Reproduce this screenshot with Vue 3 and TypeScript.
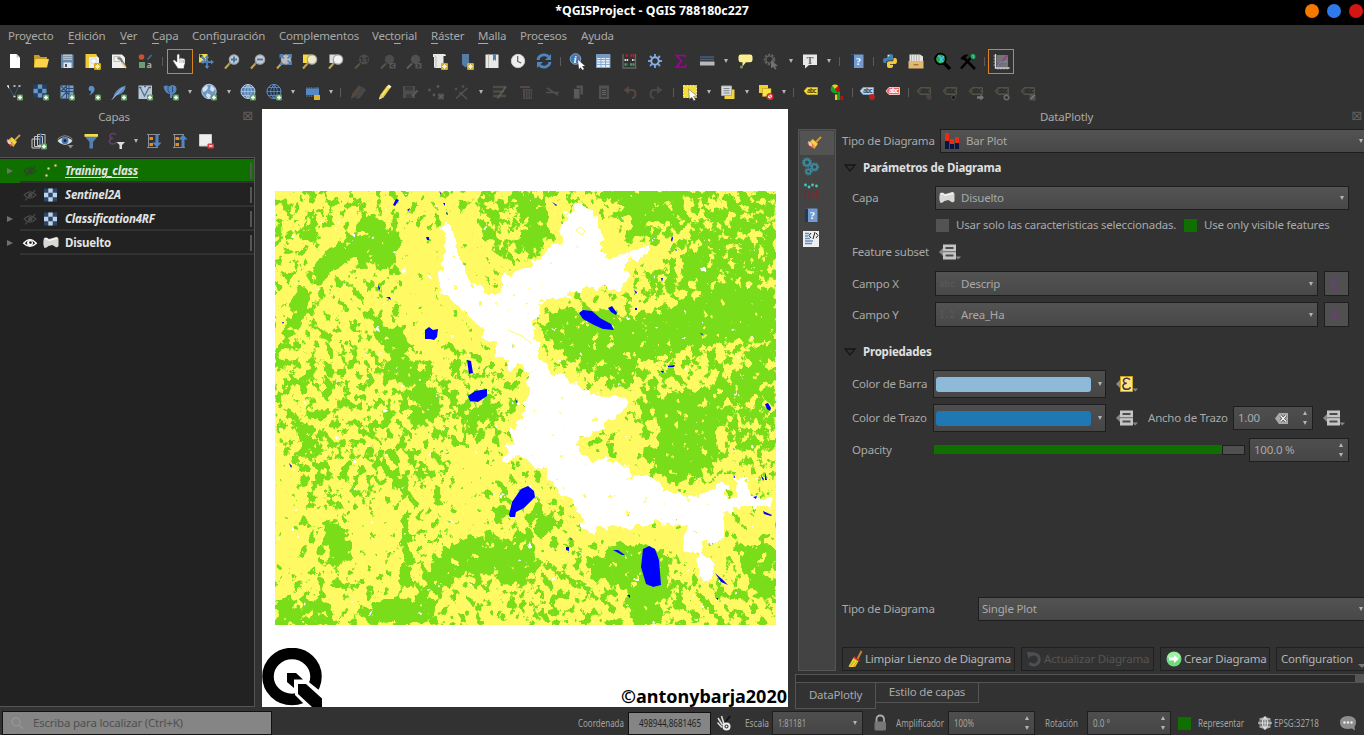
<script setup lang="ts">
interface ToolItem { k: string; w?: number; active?: boolean }

const menus: [string, string, string, number][] = [
  ['Pro', 'y', 'ecto', 60], ['', 'E', 'dición', 52], ['', 'V', 'er', 32], ['', 'C', 'apa', 40],
  ['Con', 'f', 'iguración', 87], ['Co', 'm', 'plementos', 93], ['Vect', 'o', 'rial', 59],
  ['', 'R', 'áster', 47], ['', 'M', 'alla', 42], ['Pro', 'c', 'esos', 61], ['A', 'y', 'uda', 50],
]

const plus = '<rect x="12" y="12.500" width="6" height="6" rx="1.300" fill="#5f9a63"/><path d="M15 13.500v4M13 15.500h4" stroke="#fff" stroke-width="1.500"/>'
const star = '<rect x="11" y="12" width="7" height="7" rx="1.300" fill="#d3aa1c"/><path d="M14.500 13v5M12 15.500h5M12.800 13.800l3.400 3.400M16.200 13.800l-3.400 3.400" stroke="#fff7c0" stroke-width=".9"/>'
const lens = (c: string, inner = '') => `<path d="M3 17.500l4.500-5" stroke="#d8a531" stroke-width="2"/><path d="M6.500 13.500l2-2" stroke="#888" stroke-width="2"/><circle cx="12" cy="8.500" r="4.700" fill="${c}" stroke="#a5a5a5" stroke-width="1.200"/>${inner}`
const globe = (fill: string, s: string) => `<circle cx="10" cy="9.500" r="7" fill="${fill}" stroke="${s}" stroke-width="1"/><path d="M3 9.500h14M4.500 5.500h11M4.500 13.500h11M10 2.500v14M10 2.500q-7 7 0 14M10 2.500q7 7 0 14" stroke="${s}" fill="none" stroke-width=".8"/>`
const tag = (f: string, s: string, t: string, extra = '') => `<path d="M3 9l3-3.500h10.500v7H6z" fill="${f}" stroke="${s}" stroke-width=".9"/><text x="6" y="11.300" font-size="6.500" font-weight="700" font-family="Noto Sans" fill="${t}" textLength="9.500">abc</text>${extra}`
const eps = (c: string, x: number, y: number, s: number) => `<path transform="translate(${x} ${y}) scale(${s})" d="M8 2.500Q7 .6 4.500 1 1.500 1.500 2 4q.5 1.700 3 1.700Q1.500 6 1.400 8.500q.1 3 3.600 3 2.700 0 3.500-2" fill="none" stroke="${c}" stroke-width="1.500"/>`
const brush = '<path d="M17 4l-5 5" stroke="#d99a3a" stroke-width="1.800"/><path d="M8.500 6l5.500 4.500-3.500 5.500-7-5.500z" fill="#e4a23c"/><path d="M9 6.500l4.500 4.500-2 2.500-4.500-4.500z" fill="#f6d23e"/><path d="M3 9.500l6 1.500-1 5z" fill="#d3472c"/><path d="M4 8l4 2.500.5 3-3.500-1z" fill="#e9cdbd"/>'
const checker = (a: string, b: string, n: number) => {
  const c = 13 / n
  let s = `<rect x="2" y="2" width="13" height="13" fill="${a}"/>`
  for (let i = 0; i < n; i++) for (let j = 0; j < n; j++) if ((i + j) % 2) s += `<rect x="${2 + i * c}" y="${2 + j * c}" width="${c}" height="${c}" fill="${b}"/>`
  return s
}

const ic: Record<string, string> = {
  file: '<path d="M5 3h6.500l3.500 3.500v10.500H5z" fill="#fff"/><path d="M11.500 3v3.500H15" fill="#ccc"/>',
  folder: '<path d="M3 4h5l1.500 2H16v10H3z" fill="#c99a1e"/><path d="M4.500 8H18l-2 8.500H3z" fill="#fbd44c"/>',
  save: '<path d="M4 3.500h12.500v13.500H4z" fill="#6488b2"/><path d="M6 3.500h9v5.500H6z" fill="#b9c0c5"/><path d="M6 5.500h9M6 7.500h9" stroke="#8b979f"/><path d="M6.500 11.500h8V17h-8z" fill="#e3e6e8"/><path d="M8 13h2v3H8z" fill="#41576f"/>',
  newlayout: '<path d="M3 3h9l4 4v10H3z" fill="#eee"/><path d="M2.500 3h11v3H6v11H2.500z" fill="#e8ca3b"/><path d="M8 8h5v4H8z" fill="#fff" stroke="#ccc" stroke-width=".6"/>' + star,
  layoutmgr: '<path d="M3 3.500h10l3 3v10.500H3z" fill="#f1f1f1"/><path d="M5 5.500h6v5H5z" fill="none" stroke="#aaa" stroke-width=".7"/><path d="M8.500 7.500a3 3 0 0 1 4 2l4 6" stroke="#777" stroke-width="2.200" fill="none"/><path d="M12.500 11.500l4.500 5.500" stroke="#edd57a" stroke-width="1.800"/>',
  style: '<circle cx="6.500" cy="6" r="2.800" fill="#c75331"/><path d="M4 11h6v6H4z" fill="#6f9c76"/><path d="M16.500 4l-4 4.500" stroke="#47688c" stroke-width="1.800"/><text x="11.500" y="17" font-size="9" font-weight="700" font-family="Noto Sans" fill="#aaa">a</text>',
  hand: '<path d="M7 11V4.500q0-1.500 1.300-1.500t1.200 1.500V8l1-1 1.500.3 1.300.2 1.700.8v4.200L14 15v2.500H8L5 13l-2-3q-.3-1.500 1.300-1z" fill="#fff" stroke="#555" stroke-width=".5"/><path d="M10 8v4M12 8.500V12M13.700 9v3" stroke="#888" stroke-width=".6"/>',
  pansel: '<path d="M3 3h8.500v8.500H3z" fill="#f2dd4a"/><path d="M4.500 4.500l5 5M11 6.500v9M7 11h9" stroke="#4d7db3" stroke-width="1.800"/><path d="M3.500 3.500l3.500.5-3 3z" fill="#333"/><path d="M11 4l-2.300 3h4.600zM11 18l-2.300-3h4.600zM18 11l-3-2.300v4.600zM4.500 11l3-2.300v4.600z" fill="#5688c0"/>',
  zin: lens('#c3ccd6', '<path d="M12 5.500v6M9 8.500h6" stroke="#4673a8" stroke-width="1.800"/>'),
  zout: lens('#c3ccd6', '<path d="M9 8.500h6" stroke="#4673a8" stroke-width="1.800"/>'),
  zfull: lens('#b9bcc2', '<path d="M5.500 3h4.500l-4.500 4.500zM18 3h-4.500l4.500 4.500zM18 14v-4.500l-4.500 4.500zM6 14l.5-3.500L10 14z" fill="#4f80b8"/><path d="M7 4.500l3 3M16.500 4.500l-3 3M16.500 12.500l-3-3" stroke="#4f80b8" stroke-width="1.500"/>'),
  zsel: '<path d="M3 3.500h8v8.500H3z" fill="#f4dc3a"/>' + lens('#eeeac8'),
  zlayer: '<path d="M3.500 3.500H11V12H3.500z" fill="#ddd"/>' + lens('#f2f2f0'),
  znat: '<path d="M3 17.500l5-5" stroke="#5c5640" stroke-width="1.800"/><circle cx="12" cy="8.500" r="5" fill="#4c4c4c"/><text x="7.500" y="11" font-size="7" font-weight="700" fill="#2d2d2d" font-family="Noto Sans" textLength="9">1:1</text>',
  zlast: '<path d="M3 17.500l5-5" stroke="#5c5640" stroke-width="1.800"/><circle cx="11.500" cy="8.500" r="4.700" fill="#4c4c4c"/><path d="M11.500 12h6v5.500h-6z" fill="#565656"/><path d="M16 13l-3 1.700 3 1.700" stroke="#2a2a2a" fill="none"/>',
  znext: '<path d="M3 17.500l5-5" stroke="#606060" stroke-width="1.800"/><circle cx="11.500" cy="8.500" r="4.700" fill="#505050"/><path d="M11.500 12h6v5.500h-6z" fill="#565656"/><path d="M13 13l3 1.700-3 1.700" stroke="#2a2a2a" fill="none"/>',
  newmap: '<path d="M3 3h11q2 0 2 2H13v12H6q-2 0-2-2V6H3z" fill="#e9e9e6"/><path d="M4 3.500h9.500v13H4z" fill="#e9e9e6"/><path d="M4.500 4q1.500.5 1.500 3v9" stroke="#bbb" fill="none"/>' + star,
  bookadd: '<path d="M6 3h7v10.500L9.500 16.500 6 13.500z" fill="#557da8"/>' + star,
  books: '<path d="M3.500 3.500h13v13.500h-13z" fill="#e8e8e4"/><path d="M6.500 3.500V17" stroke="#bbb"/><path d="M11 3.500h3v6.500l-1.500-1.500L11 10z" fill="#4d7fb5"/>',
  clock: '<circle cx="10" cy="10" r="6.700" fill="#eee" stroke="#c8c8c8"/><path d="M9.700 5V10.500l3.500 1.500" fill="none" stroke="#555" stroke-width="1.100"/>',
  refresh: '<path d="M4 9A6 5.500 0 0 1 14.500 5.800M16 11A6 5.500 0 0 1 5.500 14.200" fill="none" stroke="#4e86c1" stroke-width="2.800"/><path d="M17 3v6h-6zM3 17v-6h6z" fill="#4e86c1"/>',
  ident: '<circle cx="8.500" cy="8" r="5.300" fill="#4675a8" stroke="#7ba3d0"/><text x="6.700" y="11.500" font-size="10" font-style="italic" font-weight="700" font-family="Liberation Serif" fill="#fff">i</text><path d="M11 9l7 6-3 .3 2 2.700-1.500 1-2-2.700-1.500 2z" fill="#fff"/>',
  table: '<path d="M3.500 3.500h13.500v13.500H3.500z" fill="#e5eef8"/><path d="M3.500 3.500h13.500v3.500H3.500z" fill="#6d9bd0"/><path d="M3.500 8.500H17M3.500 11H17M3.500 13.500H17M3.500 16.500H17M8 3.500V17M12.500 3.500V17M3.500 3.500V17M17 3.500V17" stroke="#7ba1cb" stroke-width=".9"/>',
  abacus: '<path d="M4 3v14M16.500 3v14M3.500 17h14" stroke="#656565" stroke-width="1.300"/><path d="M7 4.500h2M11.500 4.500h4" stroke="#c31d2b" stroke-width="2.600" stroke-dasharray="1.800 .5"/><path d="M5.500 9h4M13 9h2.500" stroke="#d5ddd5" stroke-width="2.200" stroke-dasharray="1.600 .5"/><path d="M5.500 13.500h3M11 13.500h5" stroke="#4da35c" stroke-width="2.600" stroke-dasharray="1.900 .5"/>',
  gear: '<path d="M10 3v14M3 10h14M5 5l10 10M15 5L5 15" stroke="#77a3dc" stroke-width="1.900"/><circle cx="10" cy="10" r="3.700" fill="#323232" stroke="#86afe2" stroke-width="2"/>',
  sigma: '<path d="M14.500 6.500L14 4.500H5.500L10.500 10l-5 6h9l.5-2.500" fill="none" stroke="#a3009c" stroke-width="1.600"/>',
  measure: '<path d="M3 6h14M3 8.500h14" stroke="#435f83" stroke-width="1.300"/><path d="M3 10.500h14.500v4H3z" fill="#b9b9b9"/>',
  bubble: '<path d="M6 3.500h9q2.500 0 2.500 2.300V9q0 2.300-2.500 2.300h-4L7.500 15.500v-4.200H6Q3.500 11.300 3.500 9V5.800Q3.500 3.500 6 3.500z" fill="#fbee8e"/><circle cx="6.500" cy="16" r="1.600" fill="#6f9c5f"/>',
  gearoff: '<circle cx="8.500" cy="8.500" r="4.500" fill="none" stroke="#606060" stroke-width="2.600" stroke-dasharray="2.200 1"/><circle cx="8.500" cy="8.500" r="3.500" fill="none" stroke="#606060"/><path d="M10 9l7 6-3 .5 1.500 2.500-1.500.5-1.500-2.500L10 17z" fill="#717171"/>',
  text: '<path d="M3 3.500h14v10.500H9l-4 3.500v-3.500H3z" fill="#e8e8e8"/><text x="6.400" y="12.500" font-size="10.500" font-weight="700" font-family="Liberation Serif" fill="#666">T</text>',
  help: '<path d="M4 3.500h12.500v13.500H4z" fill="#6f9bd0"/><path d="M4 3.500h3v13.500H4z" fill="#26384f"/><text x="8.700" y="14" font-size="10.500" font-family="Liberation Serif" font-weight="700" fill="#fff">?</text>',
  python: '<path d="M7 8V4.500Q7 3 10 3t3 1.500V8q0 1.500-1.500 1.500H8Q6 9.500 6 12H4.500Q3 12 3 9.500T4.500 7H10V6.500" fill="#4781b3"/><path d="M13.500 7H15q2 0 2 3t-2 3h-5v.7h3V15q0 2-3 2t-3-2v-3q0-1.800 2-1.800h3q1.500 0 1.500-1.500z" fill="#f2c83f"/><circle cx="8.600" cy="4.800" r=".8" fill="#fff"/>',
  drawer: '<path d="M3.500 3.500h10.500l3 2v5H3.500z" fill="#e6e6df"/><path d="M5.500 4v7M8 4v7M10.500 4v7M13 4v7" stroke="#a9aaa4" stroke-width=".8"/><path d="M2.500 10h15v7.500h-15z" fill="#e3b870"/><path d="M7.500 13.700h5" stroke="#a27738" stroke-width="1.500"/>',
  search: '<path d="M12 12l6 6" stroke="#000" stroke-width="3.200"/><circle cx="8.500" cy="8" r="5.300" fill="#29a84a" stroke="#000" stroke-width="1.800"/><path d="M6 4.500q5 2 1.500 7M12 5L9 9l2.500 2" stroke="#3ecbe2" stroke-width="1.500" fill="none"/>',
  hammer: '<path d="M3 17.500L13.500 6M5 6l12 12" stroke="#000" stroke-width="2.500"/><path d="M2.500 8q2-5 8-4.500L5.500 9z" fill="#000"/><circle cx="15" cy="5.500" r="2.500" fill="#20a954"/><path d="M14.500 3.500l1.500 4" stroke="#29c5df"/>',
  plotly: '<path d="M4.500 3v14h14" fill="none" stroke="#ddd" stroke-width="1.300"/><path d="M2.500 5h2M2.500 8h2M2.500 11h2M2.500 14h2M7 17v1.500M10 17v1.500M13 17v1.500M16 17v1.500" stroke="#ccc" stroke-width=".8"/><path d="M5.500 4h11.500v12H5.500z" fill="#747474"/><path d="M6 13q5 .5 6-3t5-5.500" fill="none" stroke="#a92e97" stroke-width="1.300"/><path d="M6 15q5-6 11-4" fill="none" stroke="#55a2ac"/>',
  vec: '<path d="M3.500 4.500l5.500 10 4.500-10" fill="none" stroke="#3e5e7f" stroke-width=".8"/><path d="M2 4h2M8.500 4h2M13.500 4h2M3 5.500h1M8.500 14.500h2" stroke="#ddd" stroke-width="1.500"/>' + plus,
  ras: '<g transform="translate(.5 .5)">' + checker('#234066', '#6a98cb', 3) + '</g>' + plus,
  mesh: '<path d="M3.500 3.500h13v13h-13z" fill="#7fa0c5"/><path d="M4 4l5.500 5.500M9.500 4L4 9.500M4 16l5.500-6 6 6M9.500 3.500v13M3.500 9.500h13M12 4v12M9.500 6.500h7" fill="none" stroke="#2a4d78" stroke-width="1.100"/>' + plus,
  comma: '<path d="M6 5q1.500-2 4-.8 2.500 2 1 5.300-1.700 2.800-5 4 2.500-3 2-4.300-3.500-.5-2-4.200z" fill="#5c8fc7"/>' + plus,
  feather: '<path d="M4 16.500Q5.500 6.500 16.500 3.500 17 11 7.500 13.500" fill="#5c8fc7"/><path d="M3 17.500L14 5.500" stroke="#a6c4e5" fill="none"/>' + plus,
  virt: '<path d="M3.500 3.500H17V17H3.500z" fill="#b9c9da"/><path d="M5.500 6l4 8 4.500-8.500" fill="none" stroke="#52718f" stroke-width="1.300"/><path d="M4 5.500h2.500M9 4.500h2M13.500 5.500h2.500" stroke="#48647f" stroke-width="1.500"/>' + plus,
  pg: '<path d="M2.500 4.500Q5 2.500 8 4.500q4-3 7 0 1.500 4.500-1.500 7L12 12l-1 4H9v-4Q4 12 2.500 4.500z" fill="#5685ba"/><path d="M7 4.500v4.500l2 2M11.500 4.500v5.500" stroke="#294e79" fill="none"/>' + plus,
  wms: '<circle cx="10" cy="9.500" r="7.200" fill="#6f98c6" stroke="#b9cce0"/><path d="M4 6l4-3 1 3-2 3-3 1zM12 3l4 4-2 3-3-2zM8 11l4 2-2 4-3-3z" fill="#d4e1ee"/>' + plus,
  wfs: globe('#5582b8', '#b8c9db') + plus,
  wcs: globe('#1f3047', '#6493c6') + plus,
  chip: '<path d="M5 5v10M7.300 5v10M9.600 5v10M12 5v10M14.300 5v10M16 5v10" stroke="#4a6f9d"/><path d="M4 6.500h13v6.500H4z" fill="#5489c6"/><path d="M12 13h6v5h-6z" fill="#e1b52b"/>',
  penOff: '<path d="M3 17l1-5 7-9 3 2.500-7 9.500z" fill="#54483f"/><path d="M8 17l1-5 6-7 3 3-6 8z" fill="#484848"/>',
  pencil: '<path d="M5 17.500l1.200-4.500 7-9.500 3.300 2.300-7 9.700z" fill="#e8cd42"/><path d="M14 3.500l2.700 2" stroke="#faf2ce" stroke-width="2.500"/><path d="M8 13.500l6.500-9" stroke="#fff4a1"/><path d="M5 17.500l1-3.300 2.300 1.500z" fill="#ddd"/>',
  saveOff: '<path d="M3 4h12v12H3z" fill="#4e4e4e"/><path d="M5 4.500h8v4H5zM6 12h6v4H6z" fill="#3c3c3c"/><path d="M12 14l5.500-5.500" stroke="#5c5a53" stroke-width="2.200"/>',
  nodesOff: '<circle cx="3.500" cy="8" r="1.400" fill="#585858"/><circle cx="8" cy="13" r="1.400" fill="#585858"/><circle cx="12" cy="4.500" r="1.400" fill="#585858"/><rect x="12" y="11.500" width="6" height="6" fill="#4f4c44"/><path d="M13 12.500l4 4M17 12.500l-4 4" stroke="#6c6c6c"/>',
  toolOff: '<circle cx="4" cy="7" r="1.400" fill="#4e4e4e"/><circle cx="11" cy="4.500" r="1.400" fill="#4e4e4e"/><path d="M4 16.500L15.500 6M7.500 10l7.500 7" stroke="#57554c" stroke-width="1.400"/>',
  attrOff: '<path d="M3 5h13M3 9.500h11M3 14h13" stroke="#4d4d45" stroke-width="2.500"/><path d="M7.500 16.500l8.500-12" stroke="#625d54" stroke-width="1.800"/>',
  trashOff: '<path d="M4 4h10v2H4zM7 7h9v10H7z" fill="#504947"/><path d="M9.500 8v8M12 8v8M14.500 8v8" stroke="#373737"/>',
  cutOff: '<path d="M5 6l11 7M4 10.500h13" stroke="#505050" stroke-width="1.600"/>',
  copyOff: '<path d="M8.500 3.500h6.500v9H8.500z" fill="#525252"/><path d="M5.500 6.500h6.500V17H5.500z" fill="#5a5a5a" stroke="#363636"/>',
  pasteOff: '<path d="M5 3.500h10V17H5z" fill="#525252"/><path d="M7 6.500h6v8.500H7z" fill="#3c3c3c"/><path d="M8 8.500h4M8 10.500h4M8 12.500h4" stroke="#666"/>',
  undoOff: '<path d="M5 8h7q3.500 0 3.500 3.700T12 16" fill="none" stroke="#564740" stroke-width="2"/><path d="M3.500 8l5.500-4v8z" fill="#564740"/>',
  redoOff: '<path d="M15 8H8q-3.500 0-3.500 3.700T8 16" fill="none" stroke="#464b48" stroke-width="2"/><path d="M16.500 8L11 4v8z" fill="#464b48"/>',
  sel: '<path d="M3.500 3.500h13v12h-13z" fill="#f5df3d" stroke="#fff4b8" stroke-dasharray="2 1"/><path d="M8.500 7l8.500 7-3.500.4 2 3.400-1.700 1-2-3.500-2.300 2z" fill="#fff" stroke="#555" stroke-width=".5"/>',
  selval: '<path d="M6.500 7.500h10v9.500h-10z" fill="#f1d53a"/><path d="M3.500 4h10v9.500h-10z" fill="#dadada" stroke="#aaa"/><path d="M5.500 6.500h6M5.500 8.700h6M5.500 11h6" stroke="#7c8894"/>',
  desel: '<path d="M3 3h9v8H3z" fill="#f1ce36"/><path d="M6.500 6.500H15v8H6.500z" fill="#f8e34b" stroke="#b69620" stroke-width=".6"/><circle cx="14" cy="14.500" r="2.800" fill="#eee" stroke="#d52a2a" stroke-width="1.500"/><path d="M12.500 13l3.300 3.300" stroke="#d52a2a"/>',
  lab: tag('#f5df44', '#c8aa1c', '#5b4b05'),
  diag: '<circle cx="8" cy="7" r="4.300" fill="#15a329"/><path d="M8 7L5 3.500Q8 1.500 11.500 4z" fill="#f0cb19"/><path d="M8 7l3.500-3.500q2 4.500-.8 7.500z" fill="#c80d10"/><path d="M8 12.500h2.500v5.500H8z" fill="#f4c921"/><path d="M10.500 9.500h2.500v8.500h-2.500z" fill="#139c25"/><path d="M13.500 14h2.500v4h-2.500z" fill="#bd1212"/>',
  labpin: tag('#bfd8f3', '#7ca4ce', '#34536f', '<circle cx="15" cy="15" r="2.900" fill="#bd2222"/>'),
  labred: tag('#f26161', '#ffd0d0', '#fff'),
  l1: tag('#47463f', '#55534a', '#2a2a2a', '<circle cx="15" cy="15" r="2.700" fill="#4c4042"/>'),
  l2: tag('#47463f', '#55534a', '#2a2a2a', '<circle cx="13.500" cy="15.500" r="2.200" fill="#1c1c1c" stroke="#4c4c4c"/>'),
  l3: tag('#47463f', '#55534a', '#2a2a2a', '<path d="M11 14.200h3.500v-1.700l3.500 3-3.500 3v-1.700H11z" fill="#777"/>'),
  l4: tag('#47463f', '#55534a', '#2a2a2a', '<circle cx="14.500" cy="15.500" r="2.300" fill="none" stroke="#6b6b6b" stroke-width="1.500"/>'),
  l5: tag('#47463f', '#55534a', '#2a2a2a', '<rect x="11.500" y="12.500" width="6" height="6" fill="#53534e"/><path d="M13 17l3.500-4" stroke="#999"/>'),
  brush,
  addgrp: '<path d="M3 8h8v9H3zM5.500 5.500h8v10h-8zM8.500 3.500H16v11H8.500z" fill="#323232" stroke="#c7c7c7"/><path d="M11.500 2v11" stroke="#376796" stroke-width="1.500"/>' + plus,
  eyeblue: '<path d="M2.500 10q7.500-7.500 15 0-7.500 7.500-15 0z" fill="#d9dfe4"/><path d="M2.500 8q7.500-6.500 15 0" fill="none" stroke="#8a8a8a"/><circle cx="10" cy="9.700" r="3.400" fill="#4777ab"/><circle cx="10" cy="9.700" r="1.400" fill="#122237"/><path d="M12.500 14h6l-3 3.500z" fill="#8c8c8c"/>',
  filter: '<path d="M3.500 5h13.500l-5 6v6.500H8.500v-6.500z" fill="#557fb0"/><path d="M3.500 3h13.500v2.700H3.500z" fill="#f4dd41"/>',
  epsf: eps('#63406c', 1, 1.500, 1) + '<path d="M9.500 11h8.500l-3 3v4h-2.500v-4z" fill="#ddd"/>',
  expand: '<path d="M3 3.500h13M3 16.500h11M4.500 3.500v13" stroke="#999" stroke-width=".9"/><path d="M5.500 6h3.500v3H5.500zM5.500 12h3.500v3H5.500z" fill="#e98a1d"/><path d="M11.500 3.500h3v8h3l-4.500 5-4.500-5h3z" fill="#5286c1"/>',
  collapse: '<path d="M3 3.500h11M3 16.500h12M4.500 3.500v13" stroke="#999" stroke-width=".9"/><path d="M5.500 6h3.500v3H5.500zM5.500 12h3.500v3H5.500z" fill="#e98a1d"/><path d="M11.500 16.500h3v-8h3l-4.500-5-4.500 5h3z" fill="#5286c1"/>',
  remove: '<path d="M3.500 3.500h12V15h-12z" fill="#eee" stroke="#ccc"/><rect x="11.500" y="12.500" width="6.500" height="5" rx="1" fill="#dc3742"/><path d="M13 15h3.500" stroke="#fff" stroke-width="1.300"/>',
  eyeoff: '<path d="M3.500 10q6.500-7 13 0-6.500 7-13 0z" fill="none" stroke="currentColor" stroke-width="1.300"/><circle cx="10.300" cy="10" r="2.600" fill="currentColor"/><path d="M4.500 16L16 4.500" stroke="currentColor" stroke-width="1.300"/>',
  eyeon: '<path d="M3 10.300q7-8 14 0-7 7-14 0z" fill="#222" stroke="#fff" stroke-width="1.500"/><circle cx="10" cy="10" r="3.300" fill="#fff"/><circle cx="10.500" cy="9.500" r="1.500" fill="#222"/>',
  points: '<g fill="#e8d9ac" stroke="#8f6b58" stroke-width=".5"><circle cx="5.500" cy="14.500" r="1.200"/><circle cx="7.500" cy="7.500" r="1.200"/><circle cx="14.500" cy="4.500" r="1.200"/></g>',
  raster: `<g transform="translate(1 1.500)"><rect x="2" y="2" width="13" height="13" fill="#2d4665"/><path d="M6.300 2h4.400v4.300H6.300zM2 6.300h4.300v4.400H2zM10.700 6.300H15v4.400h-4.300zM6.300 10.700h4.400V15H6.300z" fill="#bcd3ea"/></g>`,
  poly: '<path d="M3 5q3-1.500 5 1 4-1 7-2 2-.5 2.500 2v7q-1 2-3 1l-3-2-4 1q-2 2-4 2-2-4-.5-10z" fill="#d8d8d5"/><path d="M4 6q3-.5 4 1.500l8-2" stroke="#fff" fill="none"/>',
  gears: '<g fill="none" stroke="#3d8799"><circle cx="6" cy="5.500" r="3" stroke-width="2.200"/><circle cx="13.500" cy="10" r="2.700" stroke-width="2"/><circle cx="7.500" cy="14.500" r="2.200" stroke-width="1.800"/><g stroke-width="1.200" stroke-dasharray="1.400 1.100"><circle cx="6" cy="5.500" r="4.500"/><circle cx="13.500" cy="10" r="4"/><circle cx="7.500" cy="14.500" r="3.500"/></g></g>',
  series: '<path d="M4 8.500v9M8 11.500v6M11.500 10.500v7M15.500 8.500v9" stroke="#7d2630"/><g fill="#49c5bd"><circle cx="4.500" cy="4" r="1.400"/><circle cx="8" cy="6" r="1.400"/><circle cx="11.500" cy="4" r="1.400"/><circle cx="15.500" cy="5" r="1.400"/></g>',
  code: '<path d="M2 2h16v16H2z" fill="#eee"/><path d="M4 4.500h4M4 7h3M4 9.500h5M4 12h8M4 14.500h7" stroke="#6590be" stroke-width="1.500"/><path d="M10 4L8 6.500 10 9M12 10l2-7M15 4l2 2.500L15 9" fill="none" stroke="#222"/>',
  bars: '<path d="M3 2h4v16H3zM8 8h4v10H8zM13 6h4v12h-4z" fill="#e92c0d"/><path d="M3 10h4v8H3zM8 13h4v5H8zM13 12h4v6h-4z" fill="#081444"/>',
  define: '<path d="M0 10l5-5v10z" fill="#85898a"/><path d="M16.500 14.500h5.500l-2.800 3z" fill="#868686"/><path d="M4 2.500h13v15H4z" fill="#c4c4c4"/><path d="M6.500 6h8M6.500 13.500h8" stroke="#4b4b4b" stroke-width="1.800"/><path d="M4 9.700h13" stroke="#6b6b6b"/>',
  defeps: '<path d="M0 10l5-5v10z" fill="#85898a"/><path d="M16.500 14.500h5.500l-2.800 3z" fill="#868686"/><path d="M4.500 2.500h12v15h-12z" fill="#f8e782" stroke="#d1a41e"/>' + eps('#51324e', 5.5, 3.2, 1.05),
  eps: eps('#6b3f78', 4, 3.5, 0.95),
  broom: '<path d="M16.500 2l-4 8" stroke="#c98232" stroke-width="2"/><path d="M8.500 8.500l5 3.500-3 5.500q-4 1-7 0z" fill="#f0d52f"/><path d="M8.500 8l6 4" stroke="#cf3129" stroke-width="2"/><path d="M5.500 17l4-5.500M8.500 17.500l3.500-5" stroke="#b29414" stroke-width=".8"/>',
  reload: '<path d="M6 6.500A5.500 5.500 0 1 1 5.500 14" fill="none" stroke="#4c5054" stroke-width="3"/><path d="M3 3l7 .5-5.500 6z" fill="#4c5054"/>',
  go: '<circle cx="10" cy="10" r="7.500" fill="#6edb7b"/><path d="M3 8.500a7.200 7.200 0 0 1 14 0q-7 2.500-14 0z" fill="#a0efa7"/><path d="M5 8.500h5V6l5 4-5 4v-2.500H5z" fill="#fff"/>',
  lock: '<path d="M6.500 9V6.500q0-4 3.700-4t3.800 4V9" fill="none" stroke="#aaa" stroke-width="1.800"/><rect x="4.500" y="8.500" width="11.500" height="9" rx="1.500" fill="#777"/>',
  world: '<circle cx="10" cy="10" r="6.500" fill="#777"/><path d="M3 10h14M4.500 6h11M4.500 14h11M10 3.500v13M10 3.500q-5.500 6.500 0 13M10 3.500q5.500 6.500 0 13" fill="none" stroke="#ddd" stroke-width="1.100"/>',
  mouse: '<path d="M4 5l4.500 7M7.500 3l2.500 8M3.500 9.500l4.500 5" stroke="#ddd" stroke-width="1.500"/><path d="M16 3l-4.500 6" stroke="#111" stroke-width="1.500"/><circle cx="12.500" cy="13.500" r="4" fill="#eee"/><circle cx="12.500" cy="13.500" r="2" fill="#333"/><circle cx="12.500" cy="13.500" r="1" fill="#eee"/>',
  msg: '<path d="M10 3q8 0 8 6.500 0 2.500-1.500 4l.5 4-3-2q-12 2-12-6Q2 3 10 3z" fill="#8e8e8e"/><g fill="#eee"><circle cx="6.500" cy="9.500" r="1.200"/><circle cx="10" cy="9.500" r="1.200"/><circle cx="13.500" cy="9.500" r="1.200"/></g>',
}

const parse = (s: string): ToolItem[] => s.trim().split(/\s+/).map((t) => {
  if (t[0] === '|') return { k: '|', w: +t.slice(1) }
  if (/^v\d+$/.test(t)) return { k: 'v', w: +t.slice(1) }
  return t.endsWith('*') ? { k: t.slice(0, -1), active: true } : { k: t }
})
const rowA = parse('file folder save newlayout layoutmgr style |9 hand* pansel zin zout zfull zsel zlayer znat zlast znext newmap bookadd books clock refresh |7 ident table abacus gear sigma measure v12 bubble gearoff v13 text v11 |10 help |7 python drawer search hammer |7 plotly*')
const rowB = parse('vec ras mesh comma feather virt pg v12 wms v13 wfs wcs v12 chip v11 |9 penOff pencil saveOff nodesOff toolOff v12 attrOff trashOff cutOff copyOff pasteOff undoOff redoOff |8 sel v12 selval v12 desel v10 |9 lab diag |4 labpin labred |5 l1 l2 l3 l4 l5')
const rowL = parse('brush addgrp eyeblue filter epsf v11 expand collapse remove')

const layers = [
  { n: 'Training_class', i: 'points', arrow: true, vis: false, it: true, sel: true },
  { n: 'Sentinel2A', i: 'raster', arrow: false, vis: false, it: true, sel: false },
  { n: 'Classification4RF', i: 'raster', arrow: true, vis: false, it: true, sel: false },
  { n: 'Disuelto', i: 'poly', arrow: true, vis: true, it: false, sel: false },
]

// Vegetation density: [gray level 0-255, polygon points]
const veg: [number, string][] = [
  [70, '275,191 400,191 400,320 275,330'],
  [95, '275,191 345,191 350,225 325,250 275,250'],
  [60, '400,191 470,191 440,260 400,240'],
  [5, '395,245 440,240 440,300 480,340 510,400 440,370 400,330'],
  [10, '320,225 335,225 350,205 365,215 345,235 320,250'],
  [95, '275,330 370,320 400,400 440,430 440,500 275,500'],
  [105, '300,380 470,400 460,470 380,500 290,470'],
  [100, '440,340 520,370 525,430 500,460 440,440'],
  [10, '275,440 300,480 300,560 275,570'],
  [15, '350,510 400,505 400,570 355,575'],
  [10, '450,450 490,440 485,540 455,540'],
  [120, '475,191 600,191 560,240 520,262 470,260'],
  [135, '600,191 775,191 775,300 640,300 640,230'],
  [10, '545,225 545,195 600,225 625,235 640,250 680,235 650,275'],
  [15, '450,215 475,205 478,235 500,262 480,280 462,255'],
  [245, '312,270 329,250 352,233 362,217 372,215 402,240 395,253 402,284 389,267 372,267 352,257 332,270 320,285'],
  [245, '302,283 312,300 299,327 289,327 292,303'],
  [240, '369,313 389,330 405,320 409,367 425,370 439,397 436,420 412,420 409,383 392,380 379,363 395,363'],
  [170, '277,377 329,367 352,370 329,377 290,382'],
  [165, '285,217 319,233 322,247 305,250 302,230'],
  [150, '345,192 362,192 365,215'],
  [180, '475,193 505,195 500,225 480,245 490,220'],
  [235, '515,193 535,193 547,215 547,250 517,247 530,230'],
  [225, '603,190 683,190 680,223 660,227 623,243 633,217'],
  [170, '710,200 775,190 775,297 740,280 720,253 705,300 685,290 683,257 710,243 712,215'],
  [230, '685,260 715,245 725,270 700,290'],
  [200, '540,326 565,308 600,310 640,316 670,310 720,285 775,297 775,420 690,430 640,420 640,385 600,378 562,357'],
  [255, '635,316 665,310 720,285 775,296 775,335 720,347 660,347'],
  [235, '560,325 640,330 660,350 640,370 600,360'],
  [105, '635,360 700,346 755,335 745,365 705,390 660,395 632,385'],
  [90, '735,355 750,335 750,365 720,380'],
  [235, '642,450 660,437 665,400 715,400 717,460 693,483 670,480 650,467'],
  [150, '725,400 775,400 775,440 753,467 733,450'],
  [185, '590,437 623,443 620,450 597,445'],
  [15, '600,425 632,420 645,440 640,490 620,460'],
  [10, '570,535 660,526 690,530 700,560 725,530 775,500 775,535 730,545 725,575 690,580 680,550 600,545'],
  [235, '585,560 620,543 640,543 673,560 667,590 660,624 635,624 628,590 600,578'],
  [105, '530,560 590,570 625,600 625,625 520,625'],
  [105, '670,570 740,580 775,605 775,625 660,625'],
  [210, '733,550 755,543 775,547 775,605 755,590 742,565'],
  [225, '527,517 540,503 557,523 540,540'],
  [235, '422,596 425,567 449,547 469,537 509,540 520,530 535,550 537,575 520,588 495,580 462,570 449,587'],
  [215, '275,598 329,602 332,624 275,624'],
  [235, '365,607 395,598 422,597 435,600 438,624 368,624'],
  [225, '327,522 345,523 352,560 332,567 322,540'],
  [225, '299,420 310,427 322,457 309,453 297,430'],
  [205, '295,470 310,468 322,482 305,482'],
  [200, '390,440 397,460 382,467'],
  [235, '405,513 412,540 409,583 400,583 402,540'],
  [215, '460,410 497,405 492,420 472,440'],
  [200, '490,512 507,490 511,500 500,525'],
  [190, '395,475 412,480 405,492'],
  [210, '457,340 461,375 455,375'],
]
const cloud = '443,213 449,223 454,237 456,253 462,263 469,280 479,287 489,293 502,293 502,277 515,272 530,268 537,263 553,243 563,247 560,227 570,210 583,203 597,217 597,230 607,233 600,247 603,260 647,245 653,253 623,263 630,273 620,290 587,287 557,300 540,297 540,313 530,323 540,347 537,360 553,373 567,377 587,393 627,397 627,407 610,420 603,427 587,437 573,443 593,463 607,457 627,467 633,477 653,477 663,483 667,493 693,497 707,493 723,478 725,497 737,497 733,478 747,480 750,493 773,500 767,507 733,507 723,517 723,540 713,543 702,540 702,553 713,563 713,577 707,582 697,573 697,557 683,550 687,527 660,523 630,527 603,527 593,535 583,530 577,507 570,497 560,493 543,470 529,463 519,453 505,463 502,457 512,443 509,433 522,420 527,400 529,387 525,367 519,363 509,373 508,363 498,357 495,343 485,340 483,325 473,320 460,307 448,295 440,293 437,277 445,260 444,230'
const lakes = [
  '425,330 429,327 433,330 438,329 437,337 434,340 430,339 425,339',
  '467,360 471,361 473,373 469,374', '468,396 475,391 487,389 487,396 478,402 470,401',
  '579,313 583,310 592,311 600,318 611,324 614,330 603,329 594,325 583,319', '608,308 612,306 617,313 616,315 611,312',
  '509,515 512,502 521,489 528,486 534,491 535,497 524,508 516,512 515,517 510,517',
  '643,549 649,546 655,549 659,560 661,585 653,587 646,584 641,567',
  '393,205 396,199 399,200 395,206', '407,210 410,208 409,211', '426,237 429,237 429,240 427,240',
  '386,297 390,297 391,300', '765,404 768,403 771,408 770,411 767,409', '715,573 723,580 728,585 721,582',
  '763,511 772,515 771,516 764,514', '661,278 663,278 662,282', '668,366 675,365 674,367 668,367',
  '660,371 664,371 663,373', '566,547 569,547 569,551 566,550', '627,595 630,595 630,598', '289,463 292,466 291,468',
  '439,191 441,193 441,195', '443,203 445,203 445,206', '447,212 448,215 446,214', '613,550 618,550 625,555 622,555', '765,472 767,480 765,480',
  '761,475 764,479 763,481', '755,510 759,509', '282,322 284,322 283,324', '515,397 517,402 516,403',
  '635,308 637,308 637,310 635,310', '634,290 637,292 636,294', '552,202 557,205 556,206', '733,477 735,476 735,478',
  '753,497 757,496 756,499', '716,598 718,598 718,600', '700,333 703,334 702,335', '570,538 572,539 571,540',
  '675,249 677,250 676,251', '672,236 673,238 672,242 671,240', '378,285 380,288 379,292',
]
</script>

<template>
  <div class="win">
    <header class="title">
      <span>*QGISProject - QGIS 788180c227</span>
      <div class="dots"><i class="o" /><i class="b" /><i class="r" /></div>
    </header>
    <nav class="menu">
      <span v-for="m in menus" :key="m[0] + m[1] + m[2]" :style="{ width: m[3] + 'px' }">{{ m[0] }}<u>{{ m[1] }}</u>{{ m[2] }}</span>
    </nav>
    <div v-for="(row, ri) in [rowA, rowB]" :key="ri" class="bar" :class="'bar' + ri">
      <div v-for="(t, i) in row" :key="i" class="slot" :class="{ on: t.active }" :style="{ width: (t.w ?? 26) + 'px' }">
        <i v-if="t.k === '|'" class="sep" />
        <i v-else-if="t.k === 'v'" class="dn" />
        <svg v-else viewBox="0 0 20 20" class="ic" v-html="ic[t.k]" />
      </div>
    </div>

    <main>
      <aside class="left">
        <div class="dock">Capas<i class="cls">⊠</i></div>
        <div class="bar ltools">
          <div v-for="(t, i) in rowL" :key="i" class="slot" :style="{ width: (t.w ?? 26) + 'px' }">
            <i v-if="t.k === 'v'" class="dn" />
            <svg v-else viewBox="0 0 20 20" class="ic" v-html="ic[t.k]" />
          </div>
        </div>
        <div class="tree">
          <div v-for="l in layers" :key="l.n" class="layer" :class="{ sel: l.sel }">
            <i class="tri" :class="{ hid: !l.arrow }" />
            <div class="lrow">
              <svg viewBox="0 0 20 20" class="ic eye" v-html="ic[l.vis ? 'eyeon' : 'eyeoff']" />
              <svg viewBox="0 0 20 20" class="ic" v-html="ic[l.i]" />
              <b :class="{ it: l.it, un: l.sel }">{{ l.n }}</b>
              <i class="grip" />
            </div>
          </div>
        </div>
      </aside>

      <section class="canvas">
        <svg class="map" viewBox="275 191 501 434" width="501" height="434">
          <defs>
            <filter id="veg" filterUnits="userSpaceOnUse" x="275" y="191" width="501" height="434" color-interpolation-filters="sRGB">
              <feGaussianBlur in="SourceGraphic" stdDeviation="2" result="b" />
              <feColorMatrix in="b" type="matrix" values="0 0 0 0 0  0 0 0 0 0  0 0 0 0 0  1 0 0 0 0" result="d" />
              <feTurbulence type="fractalNoise" baseFrequency="0.12 0.1" numOctaves="5" seed="7" />
              <feColorMatrix type="matrix" values="0 0 0 0 0  0 0 0 0 0  0 0 0 0 0  .8 .2 0 0 0" result="n" />
              <feComposite in="d" in2="n" operator="arithmetic" k1="0" k2="1" k3="2.500" k4="-1.690" />
              <feComponentTransfer result="m"><feFuncA type="linear" slope="9" intercept="0" /></feComponentTransfer>
              <feFlood flood-color="#7add19" />
              <feComposite in2="m" operator="in" />
            </filter>
            <filter id="cloud" filterUnits="userSpaceOnUse" x="275" y="191" width="501" height="434" color-interpolation-filters="sRGB">
              <feGaussianBlur in="SourceGraphic" stdDeviation="2.500" result="b" />
              <feColorMatrix in="b" type="matrix" values="0 0 0 0 0  0 0 0 0 0  0 0 0 0 0  1 0 0 0 0" result="d" />
              <feTurbulence type="fractalNoise" baseFrequency="0.12" numOctaves="5" seed="21" />
              <feColorMatrix type="matrix" values="0 0 0 0 0  0 0 0 0 0  0 0 0 0 0  1 0 0 0 0" result="n" />
              <feComposite in="d" in2="n" operator="arithmetic" k1="0" k2="1" k3="1.700" k4="-1.320" />
              <feComponentTransfer result="m"><feFuncA type="linear" slope="12" intercept="0" /></feComponentTransfer>
              <feFlood flood-color="#fff" />
              <feComposite in2="m" operator="in" />
            </filter>
          </defs>
          <rect x="275" y="191" width="501" height="434" fill="#fffa64" />
          <g filter="url(#veg)">
            <rect x="265" y="181" width="521" height="454" fill="rgb(75,75,75)" />
            <polygon v-for="(v, i) in veg" :key="i" :points="v[1]" :fill="`rgb(${v[0]},${v[0]},${v[0]})`" />
            <polygon :points="cloud" fill="#000" stroke="#080808" stroke-width="9" stroke-opacity=".8" />
          </g>
          <g filter="url(#cloud)">
            <rect x="265" y="181" width="521" height="454" fill="#000" />
            <polygon :points="cloud" fill="#fff" />
          </g>
          <path d="M576 230l4-3 5 4-3 4zM508 330l14 6 10 8" fill="#fffa64" fill-opacity="0" stroke="#fffa64" stroke-width="1" />
          <polygon v-for="(p, i) in lakes" :key="'l' + i" :points="p" fill="#0000ff" />
        </svg>
        <div class="foot">
          <svg class="q" viewBox="0 0 60 59" width="60" height="59">
            <ellipse cx="30" cy="28.500" rx="24" ry="23" fill="none" stroke="#000" stroke-width="11.500" />
            <path d="M33 33h12.500l12 9.500 4.500 4v15H47L41 55 33 47z" fill="#fff" />
            <path d="M25 25h9l7 6.500h-9V40l-7-6zM36 36h8l16 14.500V59H50L36 46z" fill="#000" />
          </svg>
          <svg class="wm" width="167" height="26" viewBox="0 0 167 26"><text x="0" y="22" textLength="166" lengthAdjust="spacingAndGlyphs">©antonybarja2020</text></svg>
        </div>
      </section>

      <aside class="right">
        <div class="dock">DataPlotly<i class="cls">⊠</i></div>
        <div class="body">
          <div class="side">
            <div class="sb on"><svg viewBox="0 0 20 20" class="ic" v-html="ic.brush" /></div>
            <div class="sb"><svg viewBox="0 0 20 20" class="ic" v-html="ic.gears" /></div>
            <div class="sb"><svg viewBox="0 0 20 20" class="ic" v-html="ic.series" /></div>
            <div class="sb"><svg viewBox="0 0 20 20" class="ic" v-html="ic.help" /></div>
            <div class="sb"><svg viewBox="0 0 20 20" class="ic" v-html="ic.code" /></div>
          </div>
          <div class="form">
            <div class="row r0"><label>Tipo de Diagrama</label><div class="combo open"><svg viewBox="0 0 20 20" class="ic" v-html="ic.bars" /><span>Bar Plot</span><i class="dn" /></div></div>
            <div class="head h0"><svg width="12" height="8"><path d="M1 1h10L6 7z" /></svg>Parámetros de Diagrama</div>
            <div class="row in capa"><label>Capa</label><div class="combo"><svg viewBox="0 0 20 20" class="ic" v-html="ic.poly" /><span>Disuelto</span><i class="dn" /></div></div>
            <div class="row in chk"><i class="cb" /><span class="c1">Usar solo las caracteristicas seleccionadas.</span><i class="cb g" /><span>Use only visible features</span></div>
            <div class="row in feat"><label>Feature subset</label><svg viewBox="0 0 22 20" class="def" v-html="ic.define" /></div>
            <div class="row in cx"><label>Campo X</label><div class="combo"><em>abc</em><span>Descrip</span><i class="dn" /></div><div class="eb"><svg viewBox="0 0 20 20" class="ic" v-html="ic.eps" /></div></div>
            <div class="row in cy"><label>Campo Y</label><div class="combo"><em>1.2</em><span>Area_Ha</span><i class="dn" /></div><div class="eb"><svg viewBox="0 0 20 20" class="ic" v-html="ic.eps" /></div></div>
            <div class="head h1"><svg width="12" height="8"><path d="M1 1h10L6 7z" /></svg>Propiedades</div>
            <div class="row in col1"><label>Color de Barra</label><div class="color"><b class="light" /><i class="dn" /></div><svg viewBox="0 0 22 20" class="def" v-html="ic.defeps" /></div>
            <div class="row in col2"><label>Color de Trazo</label><div class="color"><b class="dark" /><i class="dn" /></div><svg viewBox="0 0 22 20" class="def" v-html="ic.define" />
              <span class="ancho">Ancho de Trazo</span>
              <div class="spin w80"><span>1.00</span><svg class="clr" width="14" height="11"><path d="M0 5.500L4 0h9v11H4z" fill="#aaa" /><path d="M5.500 2.500l5.500 6M11 2.500l-5.500 6" stroke="#444" stroke-width="2.600" /><path d="M5.500 2.500l5.500 6M11 2.500l-5.500 6" stroke="#fff" stroke-width="1.200" /></svg><div class="ud"><i class="up" /><i class="dn" /></div></div>
              <svg viewBox="0 0 22 20" class="def" v-html="ic.define" /></div>
            <div class="row in opa"><label>Opacity</label><div class="slider"><i class="fill" /><i class="knob" /></div><div class="spin w100"><span>100.0 %</span><div class="ud"><i class="up" /><i class="dn" /></div></div></div>
            <div class="row tipo2"><label>Tipo de Diagrama</label><div class="combo open"><span class="sp">Single Plot</span><i class="dn" /></div></div>
            <div class="btns">
              <div class="btn b1"><svg viewBox="0 0 20 20" class="ic" v-html="ic.broom" />Limpiar Lienzo de Diagrama</div>
              <div class="btn b2"><svg viewBox="0 0 20 20" class="ic" v-html="ic.reload" />Actualizar Diagrama</div>
              <div class="btn b3"><svg viewBox="0 0 20 20" class="ic" v-html="ic.go" />Crear Diagrama</div>
              <div class="btn b4">Configuration<i class="corner" /></div>
            </div>
          </div>
        </div>
        <div class="hscroll"><i /></div>
        <div class="tabs"><div class="tab t1">DataPlotly</div><div class="tab t2">Estilo de capas</div></div>
      </aside>
    </main>

    <footer class="status">
      <div class="find"><svg width="12" height="12"><circle cx="5" cy="5" r="4" fill="none" stroke="#959595" stroke-width="1.300" /><path d="M8 8l4 4" stroke="#959595" stroke-width="1.500" /></svg>Escriba para localizar (Ctrl+K)</div>
      <svg class="st coord" width="48" height="16"><text x="0" y="12" textLength="46" lengthAdjust="spacingAndGlyphs">Coordenada</text></svg>
      <div class="cbox"><svg class="st" width="64" height="16"><text x="1" y="12" textLength="62" lengthAdjust="spacingAndGlyphs">498944,8681465</text></svg></div>
      <svg viewBox="0 0 20 20" class="ic mouse" v-html="ic.mouse" />
      <svg class="st esc" width="26" height="16"><text x="0" y="12" textLength="24" lengthAdjust="spacingAndGlyphs">Escala</text></svg>
      <div class="spin f1"><svg class="st" width="34" height="16"><text x="1" y="12" textLength="28" lengthAdjust="spacingAndGlyphs">1:81181</text></svg><i class="dn" /></div>
      <svg viewBox="0 0 20 20" class="ic lock" v-html="ic.lock" />
      <svg class="st amp" width="50" height="16"><text x="0" y="12" textLength="48" lengthAdjust="spacingAndGlyphs">Amplificador</text></svg>
      <div class="spin f2"><svg class="st" width="34" height="16"><text x="1" y="12" textLength="20" lengthAdjust="spacingAndGlyphs">100%</text></svg><div class="ud"><i class="up" /><i class="dn" /></div></div>
      <svg class="st rot" width="36" height="16"><text x="0" y="12" textLength="33" lengthAdjust="spacingAndGlyphs">Rotación</text></svg>
      <div class="spin f3"><svg class="st" width="34" height="16"><text x="1" y="12" textLength="17" lengthAdjust="spacingAndGlyphs">0.0 °</text></svg><div class="ud"><i class="up" /><i class="dn" /></div></div>
      <i class="cb g rep" />
      <svg class="st" width="50" height="16"><text x="0" y="12" textLength="46" lengthAdjust="spacingAndGlyphs">Representar</text></svg>
      <svg viewBox="0 0 20 20" class="ic world" v-html="ic.world" />
      <svg class="st" width="48" height="16"><text x="0" y="12" textLength="45" lengthAdjust="spacingAndGlyphs">EPSG:32718</text></svg>
      <svg viewBox="0 0 20 20" class="ic msg" v-html="ic.msg" />
    </footer>
  </div>
</template>

<style>
body { overflow: hidden; background: #323232; }
</style>
<style scoped>
* { box-sizing: border-box; }
.win { width: 1364px; height: 735px; overflow: hidden; display: flex; flex-direction: column; background: #323232; color: #a9a9a9; font: 11.500px/16px "Noto Sans", sans-serif; letter-spacing: -.21px; white-space: nowrap; }
.win svg text { letter-spacing: 0; }
.ic { width: 20px; height: 20px; flex: none; display: block; overflow: visible; }
.title { height: 25px; flex: none; background: #000; color: #fff; font-weight: 700; font-size: 12.300px; letter-spacing: 0; display: grid; grid-template-columns: 1304px 1fr; align-items: center; padding-bottom: 3px; }
.title > span { text-align: center; }
.dots { display: flex; gap: 8px; padding-left: 1px; }
.dots i { width: 14px; height: 14px; border-radius: 50%; flex: none; }
.o { background: #f57900; } .b { background: #3079e8; } .r { background: #d51414; }
.menu { height: 22px; flex: none; display: flex; align-items: center; padding: 0 0 1px 8px; }
.menu span { flex: none; }
.menu u { text-underline-offset: 3px; }
.bar { display: flex; align-items: center; flex: none; }
.bar0, .bar1 { padding-left: 2px; margin-top: -1px; }
.bar0 { height: 30px; } .bar1 { height: 34px; }
.slot { display: flex; align-items: center; justify-content: center; flex: none; height: 25px; }
.slot.on { border: 1px solid #d9821e; }
.sep { width: 1px; height: 9px; background: #5a5a5a; }
.dn, .up { display: block; width: 0; height: 0; flex: none; border: 2px solid transparent; border-top: 4px solid #b5b5b5; border-bottom: 0; }
.up { border-top: 0; border-bottom: 4px solid #b5b5b5; }
main { flex: none; height: 598px; display: flex; }
.left { width: 262px; flex: none; display: flex; flex-direction: column; }
.dock { height: 20px; flex: none; display: flex; align-items: center; justify-content: center; position: relative; padding-bottom: 4px; }
.left .dock { padding-right: 34px; }
.cls { position: absolute; right: 9px; top: -1px; font: 13px/16px "DejaVu Sans", sans-serif; color: #5f5f5f; }
.right .cls { right: 2px; }
.ltools { height: 28px; padding: 0 0 4px; }
.tree { width: 255px; flex: 1; border: 1px solid #555; border-left: 0; background: #222; padding-top: 1px; }
.layer { display: flex; height: 24px; align-items: center; }
.layer.sel { background: #0f7000; color: #062c06; }
.tri { width: 0; height: 0; border: 3.500px solid transparent; border-left: 6px solid #707070; border-right: 0; margin: 0 7px; flex: none; }
.hid { visibility: hidden; }
.lrow { flex: 1; display: flex; align-items: center; height: 24px; padding-top: 2px; border-bottom: 2px solid #323232; }
.eye { width: 18px; height: 18px; margin: 0 2px 0 1px; color: #494949; }
.layer.sel .eye { color: #2a4a24; }
.lrow b { color: #e4e4e4; margin-left: 4px; }
.it { font-style: italic; } .un { text-decoration: underline; text-underline-offset: 2px; }
.grip { width: 2px; height: 16px; background: #555; margin: 0 2px 0 auto; }
.canvas { width: 526px; flex: none; background: #fff; display: flex; flex-direction: column; overflow: hidden; }
.map { display: block; margin: 82px 0 0 13px; flex: none; width: 501px; }
.foot { flex: 1; display: flex; justify-content: space-between; align-items: flex-end; }
.q { display: block; }
.wm { display: block; overflow: visible; font: 700 18px "Noto Sans", sans-serif; }
.right { width: 576px; flex: none; padding-left: 7px; display: flex; flex-direction: column; }
.right .dock { padding-right: 26px; }
.body { display: flex; padding-left: 3px; height: 542px; flex: none; }
.side { width: 38px; flex: none; background: #434343; border: 1px solid #555; padding: 1px; }
.sb { height: 24px; display: flex; align-items: center; padding-left: 1px; }
.sb.on { background: #535353; padding-left: 4px; }
.form { width: 528px; flex: none; padding-left: 6px; display: flex; flex-direction: column; }
.row { display: flex; align-items: center; flex: none; height: 24px; }
.row label { flex: none; }
.in { padding-left: 10px; }
.in label { width: 83px; }
.combo { display: flex; align-items: center; height: 24px; flex: none; border: 1px solid #1e1e1e; background: linear-gradient(#535353, #484848); padding: 0 4px 0 1px; }
.combo.open { padding-right: 1px; border-right: 0; }
.combo span { flex: 1; padding-left: 4px; }
.combo .sp { padding-left: 2px; }
.combo em { font: 9px/12px "DejaVu Sans Mono", monospace; color: #5b5b5b; width: 20px; padding-left: 2px; }
.r0 label { width: 98px; } .r0 .combo { width: 424px; } .tipo2 .combo { width: 386px; }
.head { font-weight: 700; color: #e0e0e0; display: flex; align-items: center; height: 20px; flex: none; padding-left: 2px; }
.head svg { margin-right: 7px; }
.head path { fill: none; stroke: #171717; stroke-width: 1.300; }
.h0 { margin-top: 5px; } .capa { margin-top: 8px; }
.capa .combo { width: 414px; }
.chk { margin-top: 3px; padding-left: 94px; }
.cb { width: 13px; height: 13px; background: #535353; flex: none; margin-right: 7px; }
.cb.g { background: #0f7000; }
.c1 { width: 228px; flex: none; }
.feat { margin-top: 3px; } .feat .def { margin-left: 4px; }
.def { width: 22px; height: 20px; flex: none; overflow: visible; }
.cx { margin-top: 7px; height: 25px; } .cy { margin-top: 6px; height: 25px; }
.cx .combo, .cy .combo { width: 383px; height: 25px; }
.eb { width: 25px; height: 25px; margin-left: 6px; border: 1px solid #1e1e1e; background: #505050; display: flex; align-items: center; justify-content: center; }
.h1 { margin-top: 15px; }
.col1 { margin-top: 8px; height: 28px; } .col2 { margin-top: 6px; height: 28px; }
.in.col1 label, .in.col2 label { width: 81px; }
.color { width: 173px; height: 28px; border: 1px solid #1e1e1e; background: linear-gradient(#4e4e4e, #464646); display: flex; align-items: center; padding: 0 3px 0 2px; justify-content: space-between; margin-right: 10px; }
.color b { width: 155px; height: 15px; border-radius: 3px; }
.light { background: #8ebad9; } .dark { background: #1f77b4; }
.ancho { margin-left: 10px; width: 85px; flex: none; }
.spin { border: 1px solid #1e1e1e; background: linear-gradient(#4e4e4e, #464646); height: 24px; display: flex; align-items: center; padding: 0 5px 0 4px; flex: none; }
.w80 { width: 80px; margin-right: 10px; } .w100 { width: 100px; margin-left: 4px; }
.clr { margin-left: 15px; }
.ud { display: flex; flex-direction: column; gap: 6px; margin-left: auto; }
.opa { margin-top: 6px; }
.in.opa label { width: 82px; }
.slider { width: 311px; display: flex; align-items: center; flex: none; padding-bottom: 1px; }
.fill { height: 9px; flex: 1; background: #0f7000; }
.knob { width: 23px; height: 10px; border: 1px solid #1e1e1e; background: #505050; }
.tipo2 { margin-top: 135px; } .tipo2 label { width: 136px; }
.btns { display: flex; margin-top: 26px; gap: 6px; flex: none; }
.btn { height: 24px; border: 1px solid #202020; display: flex; align-items: center; padding-left: 2px; gap: 0; flex: none; color: #b4b4b4; position: relative; }
.b1 { width: 173px; } .b2 { width: 133px; color: #555; } .b3 { width: 110px; padding-left: 3px; } .b4 { width: 96px; padding-left: 4px; }
.corner { position: absolute; left: 81px; bottom: 2px; border: 4px solid transparent; border-top: 4px solid #777; border-bottom: 0; }
.hscroll { margin-top: 3px; height: 9px; flex: none; border: 1px solid #555; background: #2a2a2a; display: flex; justify-content: flex-end; }
.hscroll i { width: 8px; background: #555; }
.tabs { display: flex; align-items: flex-start; }
.tab { border: 1px solid #555; border-top: 0; display: flex; align-items: center; justify-content: center; padding-bottom: 1px; }
.t1 { width: 81px; height: 26px; } .t2 { width: 103px; height: 20px; border-left: 0; }
.status { height: 28px; flex: none; display: flex; align-items: center; padding: 4px 0 0 2px; }
.status > * { flex: none; }
.find { width: 270px; height: 24px; background: #858585; color: #505050; border: 1px solid #111; display: flex; align-items: center; gap: 10px; padding-left: 8px; }
.st { display: block; overflow: visible; font: 10.500px "Noto Sans", sans-serif; }
.st text { fill: #a3a3a3; }
.coord { margin-left: 306px; }
.cbox { width: 83px; height: 23px; background: #858585; border: 1px solid #111; margin-left: 2px; display: flex; align-items: center; justify-content: center; }
.cbox text { fill: #222; }
.mouse { margin-left: 3px; } .esc { margin-left: 11px; }
.f1 { width: 91px; margin-left: 1px; } .f1 .dn { margin-left: auto; }
.lock { margin-left: 7px; } .amp { margin-left: 6px; }
.f2 { width: 87px; margin-left: 2px; } .rot { margin-left: 10px; }
.f3 { width: 84px; margin-left: 6px; }
.rep { margin: 0 7px; }
.world { margin-left: 7px; } .world + .st { margin-left: -1px; }
.msg { margin-left: 16px; }
</style>
